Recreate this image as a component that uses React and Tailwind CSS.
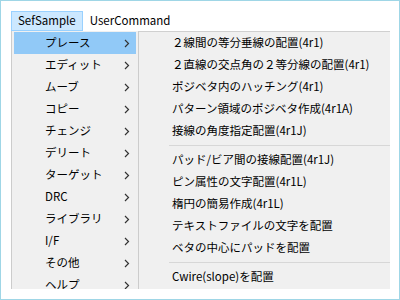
import React from 'react';

const mainItems = ['プレース', 'エディット', 'ムーブ', 'コピー', 'チェンジ', 'デリート', 'ターゲット', 'DRC', 'ライブラリ', 'I/F', 'その他', 'ヘルプ'];

const subItems = [
    '２線間の等分垂線の配置(4r1)',
    '２直線の交点角の２等分線の配置(4r1)',
    'ポジベタ内のハッチング(4r1)',
    'パターン領域のポジベタ作成(4r1A)',
    '接線の角度指定配置(4r1J)',
    '-',
    'パッド/ビア間の接線配置(4r1J)',
    'ピン属性の文字配置(4r1L)',
    '楕円の簡易作成(4r1L)',
    'テキストファイルの文字を配置',
    'ベタの中心にパッドを配置',
    '-',
    'Cwire(slope)を配置',
];

function Chevron() {
    return (
        <svg width="6" height="9" viewBox="0 0 6 9" className="block">
            <polyline points="1,1 4.5,4.5 1,8" fill="none" stroke="#333" strokeWidth="1.2" />
        </svg>
    );
}

export default function App() {
    return (
        <div
            className="w-[400px] h-[300px] border border-[#9fd6e6] bg-white text-[11.5px] text-black overflow-hidden"
            style={{ fontFamily: '"Noto Sans CJK JP", "Noto Sans", sans-serif' }}
        >
            {/* Menu bar */}
            <div className="flex items-center pl-[10px] pt-[10px] h-[30px]">
                <div className="h-[20px] flex items-center px-[6px] bg-[#cce8ff] border border-[#99d1ff]">SefSample</div>
                <div className="h-[20px] flex items-center px-[7px]">UserCommand</div>
            </div>

            {/* Dropdowns */}
            <div className="flex pl-[10px] h-[258px] overflow-hidden">
                <div className="w-[128px] bg-[#f0f0f0] border-l border-r border-[#cccccc] pt-[1px] px-[2px] shrink-0">
                    {mainItems.map((item, i) => (
                        <div
                            key={i}
                            className={`h-[22px] flex items-center justify-between pl-[31px] pr-[6px] ${i === 0 ? 'bg-[#91c9f7]' : ''}`}
                        >
                            <span>{item}</span>
                            <Chevron />
                        </div>
                    ))}
                </div>
                <div className="w-[251px] bg-[#f0f0f0] border-t border-[#d0d0d0] shrink-0">
                    {subItems.map((item, i) =>
                        item === '-' ? (
                            <div key={i} className="h-[7px] flex items-center pl-[30px]">
                                <div className="h-[1px] w-full bg-[#d7d7d7]"></div>
                            </div>
                        ) : (
                            <div key={i} className="h-[22px] flex items-center pl-[33px] whitespace-nowrap">
                                {item}
                            </div>
                        )
                    )}
                </div>
            </div>
        </div>
    );
}
